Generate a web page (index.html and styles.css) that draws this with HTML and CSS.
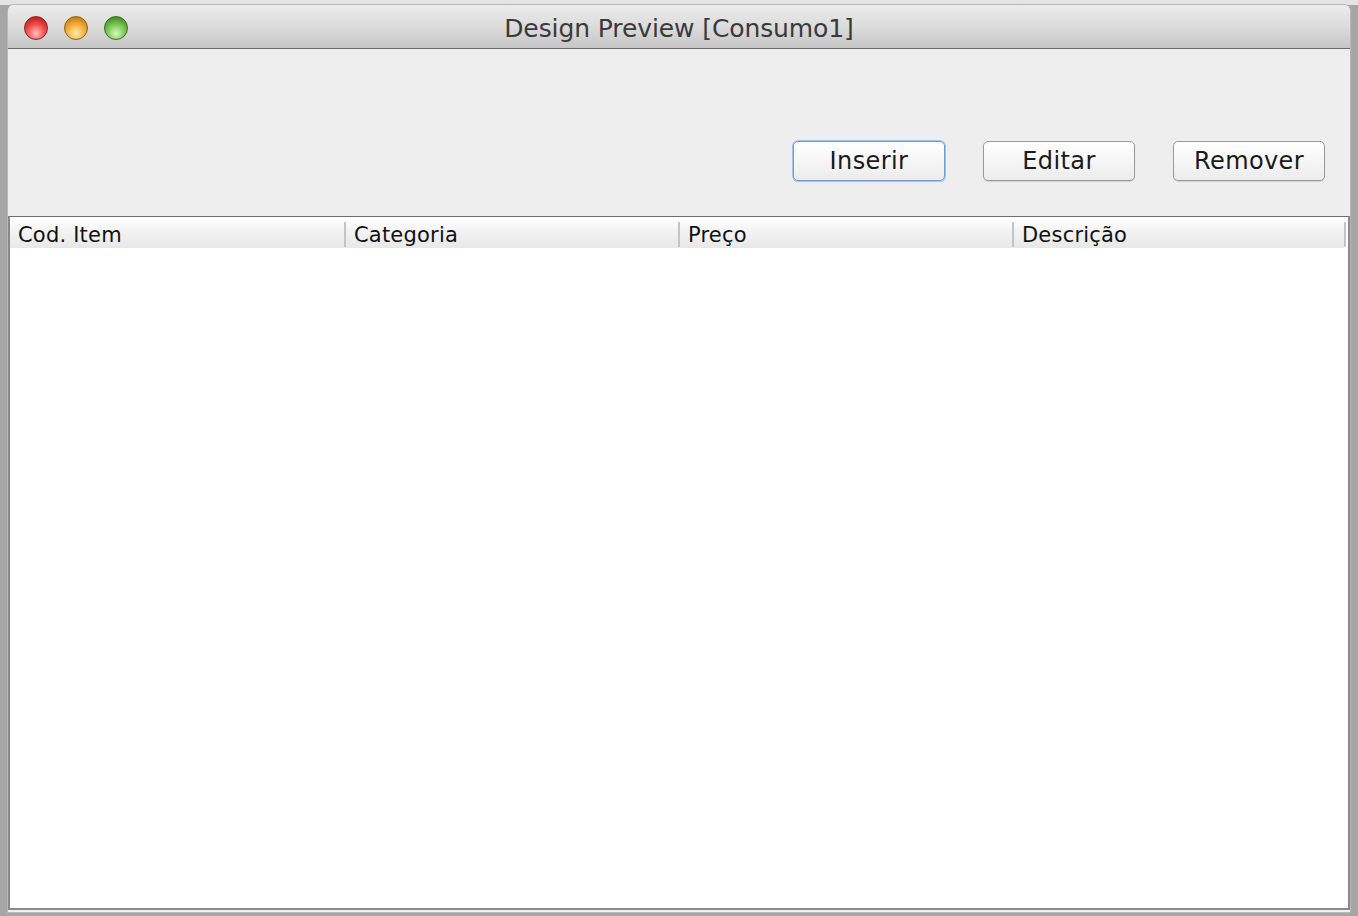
FILE: index.html
```html
<!DOCTYPE html>
<html>
<head>
<meta charset="utf-8">
<link rel="stylesheet" href="styles.css">
</head>
<body>
<div class="desktop">
  <div class="window">
    <div class="titlebar">
      <div class="lights">
        <span class="light red"></span>
        <span class="light yellow"></span>
        <span class="light green"></span>
      </div>
      <div class="title">Design Preview [Consumo1]</div>
    </div>
    <div class="toolbar">
      <button class="btn focused">Inserir</button>
      <button class="btn">Editar</button>
      <button class="btn">Remover</button>
    </div>
    <div class="scrollpane">
      <div class="thead">
        <div class="th">Cod. Item</div>
        <div class="th">Categoria</div>
        <div class="th">Preço</div>
        <div class="th">Descrição</div>
      </div>
      <div class="tbody"></div>
    </div>
  </div>
</div>
</body>
</html>
```
FILE: styles.css
```css
html, body {
  margin: 0;
  padding: 0;
}
body {
  width: 1358px;
  height: 916px;
  overflow: hidden;
  background: linear-gradient(to bottom, #e4e4e4 0, #e4e4e4 5px, #a6a6a6 5px);
  font-family: "DejaVu Sans", "Liberation Sans", sans-serif;
}
.desktop {
  padding: 5px 8px 0 8px;
}
.window {
  width: 1342px;
  height: 907px;
  background: #eeeeee;
  border-radius: 6px 6px 0 0;
  display: flex;
  flex-direction: column;
  box-shadow: 0 0 0 1px #b8b8b8;
  overflow: hidden;
}
.titlebar {
  height: 43px;
  flex: none;
  position: relative;
  background: linear-gradient(to bottom, #ececec 0%, #dcdcdc 50%, #c6c6c6 100%);
  border-bottom: 1px solid #6c6c6c;
  display: flex;
  align-items: center;
  justify-content: center;
}
.lights {
  position: absolute;
  left: 16px;
  top: 11px;
  display: flex;
  gap: 16px;
}
.light {
  width: 24px;
  height: 24px;
  border-radius: 50%;
  box-sizing: border-box;
}
.red {
  background: radial-gradient(circle at 50% 75%, #ffc0c0 0%, #f05050 45%, #c01818 85%);
  border: 1px solid #8a2424;
}
.yellow {
  background: radial-gradient(circle at 50% 75%, #ffeab0 0%, #f5b040 45%, #c27b10 85%);
  border: 1px solid #8d6212;
}
.green {
  background: radial-gradient(circle at 50% 75%, #d8f8c0 0%, #7cc858 45%, #3e8a22 85%);
  border: 1px solid #3a6a24;
}
.title {
  font-size: 25px;
  color: #3a3a3a;
  padding-top: 3px;
  letter-spacing: -0.1px;
}
.toolbar {
  height: 167px;
  flex: none;
  box-sizing: border-box;
  padding: 92px 25px 0 0;
  display: flex;
  justify-content: flex-end;
  align-items: flex-start;
  gap: 38px;
}
.btn {
  width: 152px;
  height: 40px;
  font-family: "DejaVu Sans", "Liberation Sans", sans-serif;
  font-size: 24px;
  letter-spacing: 0.4px;
  color: #1a1a1a;
  background: linear-gradient(to bottom, #ffffff 0%, #f6f6f6 50%, #ececec 100%);
  border: 1px solid #9a9a9a;
  border-radius: 5px;
  padding: 0;
  box-shadow: 0 1px 1px rgba(0,0,0,0.12);
}
.btn.focused {
  border: 1px solid #6e9ad0;
  box-shadow: 0 0 0 1px #a6c4e6, 0 1px 1px rgba(0,0,0,0.1);
}
.scrollpane {
  flex: 1;
  border-top: 1px solid #707070;
  border-left: 2px solid #8a8a8a;
  border-right: 2px solid #8a8a8a;
  border-bottom: 2px solid #8a8a8a;
  background: #ffffff;
  display: flex;
  flex-direction: column;
  padding-top: 1px;
  margin-bottom: 2px;
}
.thead {
  height: 30px;
  display: grid;
  grid-template-columns: 336px 334px 334px 332px;
  background: linear-gradient(to bottom, #ffffff 0%, #f4f4f4 40%, #e8e8e8 100%);
  box-shadow: 0 1px 2px rgba(0,0,0,0.04);
  margin-right: 4px;
}
.th {
  font-size: 21px;
  letter-spacing: 0.2px;
  color: #111111;
  padding: 1px 0 0 8px;
  border-right: 2px solid #c4c4c4;
  box-sizing: border-box;
  line-height: 24px;
  margin: 4px 0 2px 0;
}
.tbody {
  flex: 1;
  background: #ffffff;
}
```
